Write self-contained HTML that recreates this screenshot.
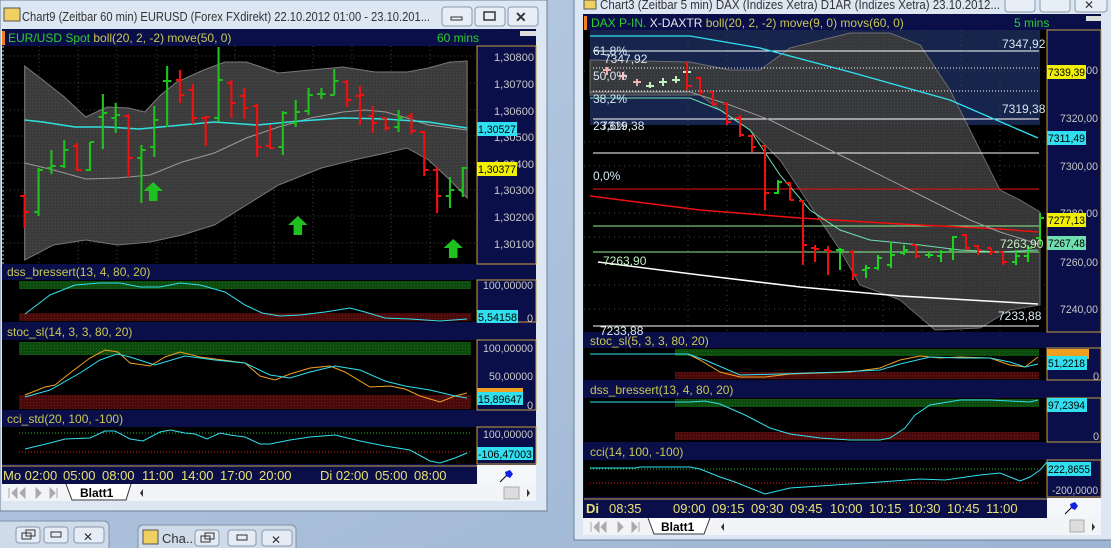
<!DOCTYPE html>
<html><head><meta charset="utf-8"><style>
html,body{margin:0;padding:0;width:1111px;height:548px;overflow:hidden;background:#a9bfd9;}
svg{display:block}
text{font-family:"Liberation Sans",sans-serif;}
</style></head><body>
<svg width="1111" height="548" viewBox="0 0 1111 548" xmlns="http://www.w3.org/2000/svg">
<defs>
<pattern id="dots" width="3" height="3" patternUnits="userSpaceOnUse"><rect width="3" height="3" fill="#3b3b3b"/><rect width="1" height="1" fill="#4a4a4a"/></pattern>
<pattern id="gdots" width="3" height="3" patternUnits="userSpaceOnUse"><rect width="3" height="3" fill="#0d4a0d"/><rect width="1" height="1" fill="#1a6a1a"/></pattern>
<pattern id="rdots" width="3" height="3" patternUnits="userSpaceOnUse"><rect width="3" height="3" fill="#4a0a0a"/><rect width="1" height="1" fill="#6a1a1a"/></pattern>
<linearGradient id="bg" x1="0" y1="0" x2="1" y2="1"><stop offset="0" stop-color="#b8cbe2"/><stop offset="1" stop-color="#9db5d3"/></linearGradient>
</defs>
<rect width="1111" height="548" fill="url(#bg)"/>

<!-- LEFT WINDOW -->
<rect x="0" y="0" width="547" height="511" fill="#dce7f3" stroke="#6d7f96"/>
<rect x="4" y="8" width="16" height="13" fill="#f0d060" stroke="#555"/>
<text x="22" y="21" font-size="13" fill="#333" textLength="408" lengthAdjust="spacingAndGlyphs">Chart9 (Zeitbar 60 min)  EURUSD (Forex FXdirekt) 22.10.2012 01:00 - 23.10.201...</text>
<rect x="442" y="7" width="30" height="19" rx="3" fill="#e8eef6" stroke="#8898ad"/><rect x="451" y="17" width="11" height="3" fill="none" stroke="#333"/>
<rect x="475" y="7" width="30" height="19" rx="3" fill="#e8eef6" stroke="#8898ad"/><rect x="484" y="12" width="11" height="8" fill="none" stroke="#333" stroke-width="1.5"/>
<rect x="508" y="7" width="30" height="19" rx="3" fill="#e8eef6" stroke="#8898ad"/><text x="515" y="22" font-size="14" font-weight="bold" fill="#333">✕</text>

<rect x="2" y="29" width="534" height="455" fill="#0a0f4a"/>
<rect x="2" y="31" width="3" height="14" fill="#f08020"/>
<text x="8" y="42" font-size="12" fill="#2bd02b">EUR/USD Spot <tspan fill="#c8c850">boll(20, 2, -2) move(50, 0)</tspan></text>
<text x="437" y="42" font-size="12" fill="#2bd02b">60 mins</text>
<rect x="520" y="31" width="16" height="5" fill="#ddd"/>
<rect x="2" y="46" width="475" height="218" fill="#000"/>
<rect x="477" y="46" width="59" height="218" fill="#0a0f4a" stroke="#c8a040"/>
<g stroke="#444" stroke-dasharray="1,3">
<line x1="2" y1="56" x2="477" y2="56"/><line x1="2" y1="83" x2="477" y2="83"/><line x1="2" y1="110" x2="477" y2="110"/><line x1="2" y1="136" x2="477" y2="136"/><line x1="2" y1="163" x2="477" y2="163"/><line x1="2" y1="190" x2="477" y2="190"/><line x1="2" y1="216" x2="477" y2="216"/><line x1="2" y1="243" x2="477" y2="243"/>
<line x1="39" y1="46" x2="39" y2="264"/><line x1="78" y1="46" x2="78" y2="264"/><line x1="117" y1="46" x2="117" y2="264"/><line x1="157" y1="46" x2="157" y2="264"/><line x1="196" y1="46" x2="196" y2="264"/><line x1="235" y1="46" x2="235" y2="264"/><line x1="274" y1="46" x2="274" y2="264"/><line x1="313" y1="46" x2="313" y2="264"/><line x1="352" y1="46" x2="352" y2="264"/><line x1="391" y1="46" x2="391" y2="264"/><line x1="430" y1="46" x2="430" y2="264"/>
</g>
<g transform="scale(1.0714,1)">
<polygon fill="url(#dots)" stroke="#777" points="23,66 40,80 60,97 80,117 100,107 120,108 135,112 150,95 165,82 190,70 210,62 230,62 260,73 290,70 320,67 350,72 380,72 400,68 420,62 436,61 436,198 420,180 400,160 380,148 360,153 330,160 300,168 260,185 230,205 200,225 170,235 140,242 110,245 80,240 50,245 23,260"/>
<polyline fill="none" stroke="#999" points="23,163 50,170 80,179 110,178 140,175 170,162 200,153 230,138 260,127 290,118 320,112 340,110 360,112 380,118 400,125 436,130"/>
<polyline fill="none" stroke="#30e0e0" stroke-width="1.5" points="23,120 40,122 70,127 100,127 130,129 160,126 200,122 240,125 280,121 320,118 360,119 400,122 436,128"/>
<g stroke-width="2">
<path stroke="#f01010" d="M23,194V228M19,196H23M23,212H27M72,143V171M68,146H72M72,170H76M120,114V177M116,116H120M120,158H124M168,70V103M164,80H168M168,95H172M180,84V124M176,90H180M180,118H184M192,116V146M188,118H192M192,117H196M216,80V118M212,83H216M216,103H220M228,88V119M224,96H228M228,108H232M240,104V157M236,106H240M240,147H244M252,125V149M248,146H252M252,148H256M324,80V107M320,82H324M324,100H328M336,86V125M332,96H336M336,95H340M348,106V133M344,116H348M348,123H352M360,118V131M356,118H360M360,128H364M384,113V134M380,116H384M384,131H388M396,131V176M392,132H396M396,170H400M408,167V213M404,170H408M408,196H412"/>
<path stroke="#20c020" d="M36,168V216M32,212H36M36,170H40M48,150V174M44,168H48M48,166H52M60,140V168M56,166H60M60,150H64M84,142V171M80,170H84M84,142H88M96,94V149M92,117H96M96,113H100M108,103V133M104,118H108M108,115H112M132,145V203M128,158H132M132,150H136M144,106V157M140,147H144M144,120H148M156,66V127M152,81H156M156,81H160M204,47V122M200,118H204M204,80H208M264,111V155M260,147H264M264,113H268M276,100V127M272,123H276M276,112H280M288,88V115M284,111H288M288,95H292M300,88V99M296,94H300M300,94H304M312,69V95M308,95H312M312,81H316M372,110V132M368,127H372M372,118H376M420,177V208M416,196H420M420,190H424M432,167V197M428,190H432M432,168H436"/>
</g>
<path fill="#20c020" d="M143,182l9,9h-5v10h-8v-10h-5z M278,216l9,9h-5v10h-8v-10h-5z M423,239l9,9h-5v10h-8v-10h-5z"/>
</g>
<g font-size="11" fill="#c8c8c8">
<text x="494" y="61" textLength="40" lengthAdjust="spacingAndGlyphs">1,30800</text><text x="494" y="88" textLength="40" lengthAdjust="spacingAndGlyphs">1,30700</text><text x="494" y="115" textLength="40" lengthAdjust="spacingAndGlyphs">1,30600</text><text x="494" y="141" textLength="40" lengthAdjust="spacingAndGlyphs">1,30500</text><text x="494" y="168" textLength="40" lengthAdjust="spacingAndGlyphs">1,30400</text><text x="494" y="194" textLength="40" lengthAdjust="spacingAndGlyphs">1,30300</text><text x="494" y="221" textLength="40" lengthAdjust="spacingAndGlyphs">1,30200</text><text x="494" y="248" textLength="40" lengthAdjust="spacingAndGlyphs">1,30100</text>
</g>
<rect x="477" y="122" width="40" height="14" fill="#30e0f0"/><text x="478" y="133" font-size="11" fill="#000" textLength="38" lengthAdjust="spacingAndGlyphs">1,30527</text>
<rect x="477" y="162" width="40" height="14" fill="#f0f000"/><text x="478" y="173" font-size="11" fill="#000" textLength="38" lengthAdjust="spacingAndGlyphs">1,30377</text>
<line x1="3" y1="46" x2="3" y2="264" stroke="#ccc" stroke-dasharray="2,2"/>

<!-- dss -->
<text x="7" y="276" font-size="12" fill="#c8c850">dss_bressert(13, 4, 80, 20)</text>
<rect x="2" y="280" width="475" height="42" fill="#000"/>
<rect x="19" y="281" width="452" height="8" fill="url(#gdots)"/>
<rect x="19" y="313" width="452" height="8" fill="url(#rdots)"/>
<rect x="477" y="280" width="59" height="42" fill="#0a0f4a" stroke="#c8a040"/>
<polyline fill="none" stroke="#30e0f0" points="25,314 50,295 75,285 100,283 120,283 140,287 160,287 180,283 200,285 225,292 245,305 262,313 280,316 300,315 325,312 350,308 365,312 385,318 410,319 440,321 467,319"/>
<text x="483" y="289" font-size="11" fill="#c8c8c8" textLength="50" lengthAdjust="spacingAndGlyphs">100,00000</text><text x="527" y="322" font-size="11" fill="#c8c8c8">0</text>
<rect x="477" y="310" width="41" height="13" fill="#30e0f0"/><text x="478" y="321" font-size="11" fill="#000" textLength="39" lengthAdjust="spacingAndGlyphs">5,54158</text>
<!-- stoc -->
<text x="7" y="336" font-size="12" fill="#c8c850">stoc_sl(14, 3, 3, 80, 20)</text>
<rect x="2" y="340" width="475" height="70" fill="#000"/>
<rect x="19" y="342" width="452" height="13" fill="url(#gdots)"/>
<rect x="19" y="395" width="452" height="14" fill="url(#rdots)"/>
<rect x="477" y="340" width="59" height="70" fill="#0a0f4a" stroke="#c8a040"/>
<polyline fill="none" stroke="#f0a020" points="25,395 45,387 55,385 70,373 90,358 105,350 118,352 130,363 150,366 165,357 180,352 200,357 245,363 260,376 275,380 290,374 310,368 330,366 345,372 370,387 390,386 405,389 420,396 440,402 455,396 467,393"/>
<polyline fill="none" stroke="#30e0f0" points="25,397 50,390 80,373 100,360 117,354 130,357 155,365 185,356 215,360 245,363 270,375 290,378 310,372 335,366 360,370 385,381 405,386 430,390 455,396 467,398"/>
<text x="483" y="352" font-size="11" fill="#c8c8c8" textLength="50" lengthAdjust="spacingAndGlyphs">100,00000</text><text x="489" y="380" font-size="11" fill="#c8c8c8" textLength="44" lengthAdjust="spacingAndGlyphs">50,00000</text><text x="527" y="409" font-size="11" fill="#c8c8c8">0</text>
<rect x="477" y="388" width="46" height="9" fill="#f0a020"/>
<rect x="477" y="392" width="46" height="13" fill="#30e0f0"/><text x="478" y="403" font-size="11" fill="#000" textLength="44" lengthAdjust="spacingAndGlyphs">15,89647</text>
<!-- cci -->
<text x="7" y="423" font-size="12" fill="#c8c850">cci_std(20, 100, -100)</text>
<rect x="2" y="427" width="475" height="37" fill="#000"/>
<line x1="19" y1="433" x2="471" y2="433" stroke="#20c020" stroke-dasharray="1,2"/>
<line x1="19" y1="452" x2="471" y2="452" stroke="#e02020" stroke-dasharray="1,2"/>
<rect x="477" y="427" width="59" height="37" fill="#0a0f4a" stroke="#c8a040"/>
<polyline fill="none" stroke="#30e0f0" points="25,449 50,443 65,439 90,438 105,431 115,431 130,439 143,441 160,432 170,430 185,433 195,434 207,439 220,433 230,435 245,437 260,444 270,444 290,440 310,437 335,435 360,441 385,446 410,450 430,461 440,463 455,458 467,453"/>
<text x="483" y="438" font-size="11" fill="#c8c8c8" textLength="50" lengthAdjust="spacingAndGlyphs">100,00000</text>
<rect x="477" y="447" width="56" height="13" fill="#30e0f0"/><text x="478" y="458" font-size="11" fill="#000" textLength="54" lengthAdjust="spacingAndGlyphs">-106,47003</text>
<!-- time axis -->
<rect x="2" y="465" width="475" height="19" fill="#0a0f4a"/>
<line x1="2" y1="466" x2="477" y2="466" stroke="#c8a040"/>
<rect x="477" y="465" width="59" height="19" fill="#f4f6fa"/>
<path d="M500,482 L508,474" stroke="#000"/><path fill="#1020e0" d="M505,472l5,-2l3,4l-3,4l-4,-2z"/>
<g font-size="13" fill="#e8e070"><text x="3" y="480">Mo 02:00</text><text x="63" y="480">05:00</text><text x="102" y="480">08:00</text><text x="142" y="480">11:00</text><text x="181" y="480">14:00</text><text x="220" y="480">17:00</text><text x="259" y="480">20:00</text><text x="320" y="480">Di 02:00</text><text x="375" y="480">05:00</text><text x="414" y="480">08:00</text></g>
<rect x="2" y="484" width="534" height="17" fill="#f2f4f8"/>
<g fill="#aaa" stroke="#aaa"><path d="M9,488v10M17,488l-5,5l5,5zM25,488l-5,5l5,5zM36,488l5,5l-5,5zM50,488l5,5l-5,5zM57,488v10"/></g>
<path d="M66,484 L72,500 H126 L131,484" fill="#fff" stroke="#333"/>
<text x="80" y="497" font-size="12" font-weight="bold" fill="#000">Blatt1</text>
<path d="M143,489l-3,4l3,4z" fill="#333"/>
<rect x="504" y="487" width="15" height="12" fill="#ddd" stroke="#aaa"/><path d="M527,489l3,4l-3,4z" fill="#333"/>

<!-- bottom taskbar bits -->
<rect x="-5" y="521" width="114" height="30" rx="5" fill="#cfdbe9" stroke="#7f90a8"/>
<rect x="16" y="527" width="24" height="16" rx="3" fill="#e5ecf5" stroke="#8898ad"/><rect x="22" y="533" width="9" height="6" fill="none" stroke="#333"/><rect x="26" y="530" width="9" height="6" fill="none" stroke="#333"/>
<rect x="44" y="527" width="24" height="16" rx="3" fill="#e5ecf5" stroke="#8898ad"/><rect x="51" y="532" width="10" height="5" fill="none" stroke="#333"/>
<rect x="74" y="527" width="30" height="16" rx="3" fill="#e5ecf5" stroke="#8898ad"/><text x="83" y="541" font-size="12" fill="#333">✕</text>
<rect x="138" y="525" width="158" height="28" rx="5" fill="#cfdbe9" stroke="#7f90a8"/>
<rect x="143" y="530" width="15" height="14" fill="#f0d060" stroke="#555"/>
<text x="162" y="543" font-size="13" fill="#333">Cha...</text>
<rect x="195" y="530" width="24" height="16" rx="3" fill="#e5ecf5" stroke="#8898ad"/><rect x="201" y="536" width="9" height="6" fill="none" stroke="#333"/><rect x="205" y="533" width="9" height="6" fill="none" stroke="#333"/>
<rect x="228" y="530" width="28" height="16" rx="3" fill="#e5ecf5" stroke="#8898ad"/><rect x="237" y="535" width="10" height="5" fill="none" stroke="#333"/>
<rect x="262" y="530" width="30" height="16" rx="3" fill="#e5ecf5" stroke="#8898ad"/><text x="271" y="544" font-size="12" fill="#333">✕</text>

<!-- RIGHT WINDOW -->
<rect x="574" y="-2" width="540" height="542" fill="#dce7f3" stroke="#6d7f96"/>
<rect x="584" y="0" width="12" height="9" fill="#f0d060" stroke="#555"/>
<text x="600" y="9" font-size="13" fill="#333" textLength="400" lengthAdjust="spacingAndGlyphs">Chart3 (Zeitbar 5 min)  DAX (Indizes Xetra) D1AR (Indizes Xetra) 23.10.2012...</text>
<rect x="1005" y="-5" width="30" height="17" rx="3" fill="#e8eef6" stroke="#8898ad"/>
<rect x="1040" y="-5" width="30" height="17" rx="3" fill="#e8eef6" stroke="#8898ad"/>
<rect x="1075" y="-5" width="32" height="17" rx="3" fill="#e8eef6" stroke="#8898ad"/><text x="1084" y="9" font-size="12" fill="#333">✕</text>

<rect x="583" y="14" width="518" height="504" fill="#0a0f4a"/>
<rect x="584" y="16" width="3" height="14" fill="#f08020"/>
<text x="591" y="27" font-size="12" fill="#2bd02b">DAX P-IN. <tspan fill="#e8e8e8">X-DAXTR</tspan> <tspan fill="#c8c850">boll(20, 2, -2) move(9, 0) movs(60, 0)</tspan></text>
<text x="1014" y="27" font-size="12" fill="#2bd02b">5 mins</text>
<rect x="1086" y="16" width="15" height="5" fill="#ddd"/>
<rect x="584" y="30" width="463" height="302" fill="#000"/>
<rect x="590" y="30" width="450" height="95" fill="#1b2a58" opacity="0.85"/>
<polygon fill="url(#dots)" opacity="0.9" stroke="#777" points="590,60 690,62 730,70 760,70 790,48 850,33 890,33 920,45 950,90 975,140 1000,190 1020,200 1040,212 1040,305 1010,310 980,328 935,330 900,300 860,285 840,250 820,220 800,190 780,160 750,130 720,110 700,95 590,95"/>
<g stroke="#444" stroke-dasharray="1,4">
<line x1="584" y1="71" x2="1047" y2="71"/><line x1="584" y1="142" x2="1047" y2="142"/><line x1="584" y1="166" x2="1047" y2="166"/><line x1="584" y1="213" x2="1047" y2="213"/><line x1="584" y1="237" x2="1047" y2="237"/><line x1="584" y1="285" x2="1047" y2="285"/><line x1="584" y1="309" x2="1047" y2="309"/>
<line x1="688" y1="30" x2="688" y2="332"/><line x1="727" y1="30" x2="727" y2="332"/><line x1="766" y1="30" x2="766" y2="332"/><line x1="805" y1="30" x2="805" y2="332"/><line x1="844" y1="30" x2="844" y2="332"/><line x1="883" y1="30" x2="883" y2="332"/><line x1="922" y1="30" x2="922" y2="332"/><line x1="961" y1="30" x2="961" y2="332"/><line x1="1000" y1="30" x2="1000" y2="332"/>
</g>
<g stroke="#fff">
<line x1="593" y1="51" x2="1039" y2="51"/><line x1="593" y1="68" x2="1039" y2="68" stroke-dasharray="1,2"/><line x1="593" y1="91" x2="1039" y2="91" stroke-dasharray="1,2"/><line x1="593" y1="119" x2="1039" y2="119"/><line x1="593" y1="153" x2="1039" y2="153"/><line x1="593" y1="326" x2="1039" y2="326"/>
</g>
<line x1="593" y1="189" x2="1039" y2="189" stroke="#f01010"/>
<line x1="593" y1="226" x2="1039" y2="226" stroke="#90f090"/>
<line x1="593" y1="252" x2="1039" y2="252" stroke="#90f090"/>
<polyline fill="none" stroke="#f01010" stroke-width="1.5" points="590,196 700,210 800,218 900,224 1000,229 1038,232"/>
<polyline fill="none" stroke="#fff" stroke-width="1.5" points="598,262 700,275 800,287 900,296 1038,304"/>
<polyline fill="none" stroke="#30e0f0" stroke-width="1.3" points="590,36 690,36 760,48 850,72 950,100 1038,138"/>
<polyline fill="none" stroke="#999" points="590,92 690,92 730,105 770,120 820,145 870,170 920,195 970,220 1000,232 1038,244"/>
<polyline fill="none" stroke="#70e0b0" points="590,98 690,98 720,110 750,130 780,175 810,210 840,230 870,240 920,245 960,250 1000,252 1038,250"/>
<g stroke-width="2">
<path stroke="#f0b0b0" d="M607,67V75M603,70H611M623,72V80M619,76H627M637,79V86M633,82H641"/>
<path stroke="#c0f0c0" d="M650,82V88M646,86H654M663,78V86M659,82H667M676,76V83M672,80H680M687,66V77M683,72H691"/>
<path stroke="#f01010" d="M687,62V90M687,86H692M700,77V95M696,78H700M700,92H704M713,92V106M709,92H713M713,104H717M727,102V125M723,104H727M727,122H731M740,115V137M736,118H740M740,135H744M752,135V152M748,136H752M752,147H756M765,146V210M761,146H765M765,193H769M790,182V200M786,183H790M790,200H794M803,200V265M799,201H803M803,245H807M815,245V262M811,248H815M815,249H819M828,246V275M824,250H828M828,251H832M853,250V280M849,252H853M853,275H857M916,245V258M912,245H916M916,256H920M966,234V250M962,235H966M966,248H970M978,245V255M974,246H978M978,250H982M991,248V255M987,248H991M991,252H995M1003,252V265M999,252H1003M1003,262H1007"/>
<path stroke="#20d020" d="M778,180V194M774,193H778M778,182H782M840,248V270M836,250H840M840,250H844M866,265V278M862,270H866M866,268H870M878,255V270M874,268H878M878,258H882M891,242V268M887,265H891M891,255H895M904,245V255M900,253H904M904,250H908M929,252V258M925,255H929M929,255H933M941,250V262M937,256H941M941,252H945M953,236V260M949,250H953M953,237H957M1016,250V265M1012,262H1016M1016,256H1020M1028,245V262M1024,256H1028M1028,248H1032M1040,213V245M1036,238H1040M1040,218H1044"/>
</g>
<g font-size="12" fill="#d8e8f0">
<text x="1002" y="48">7347,92</text><text x="593" y="55">61,8%</text><text x="604" y="63">7347,92</text><text x="593" y="80">50,0%</text><text x="593" y="103">38,2%</text><text x="1002" y="113">7319,38</text><text x="593" y="130">23,6%</text><text x="601" y="130">7319,38</text><text x="593" y="180">0,0%</text><text x="603" y="265" fill="#c0f0c0">7263,90</text><text x="1000" y="248" fill="#c0f0c0">7263,90</text><text x="998" y="320">7233,88</text><text x="600" y="335">7233,88</text>
</g>
<rect x="1047" y="30" width="54" height="302" fill="#0a0f4a" stroke="#c8a040"/>
<g font-size="11" fill="#c8c8c8"><text x="1060" y="74" textLength="38" lengthAdjust="spacingAndGlyphs">7340,00</text><text x="1060" y="122" textLength="38" lengthAdjust="spacingAndGlyphs">7320,00</text><text x="1060" y="170" textLength="38" lengthAdjust="spacingAndGlyphs">7300,00</text><text x="1060" y="217" textLength="38" lengthAdjust="spacingAndGlyphs">7280,00</text><text x="1060" y="266" textLength="38" lengthAdjust="spacingAndGlyphs">7260,00</text><text x="1060" y="313" textLength="38" lengthAdjust="spacingAndGlyphs">7240,00</text></g>
<rect x="1047" y="65" width="39" height="14" fill="#f0f000"/><text x="1048" y="76" font-size="11" fill="#000" textLength="37" lengthAdjust="spacingAndGlyphs">7339,39</text>
<rect x="1047" y="131" width="39" height="14" fill="#30e0f0"/><text x="1048" y="142" font-size="11" fill="#000" textLength="37" lengthAdjust="spacingAndGlyphs">7311,49</text>
<rect x="1047" y="213" width="39" height="14" fill="#f0f000"/><text x="1048" y="224" font-size="11" fill="#000" textLength="37" lengthAdjust="spacingAndGlyphs">7277,13</text>
<rect x="1047" y="236" width="39" height="14" fill="#70e0b0"/><text x="1048" y="247" font-size="11" fill="#000" textLength="37" lengthAdjust="spacingAndGlyphs">7267,48</text>
<!-- stoc right -->
<text x="590" y="345" font-size="12" fill="#c8c850">stoc_sl(5, 3, 3, 80, 20)</text>
<rect x="584" y="348" width="463" height="32" fill="#000"/>
<rect x="675" y="349" width="364" height="7" fill="url(#gdots)"/>
<rect x="675" y="372" width="364" height="7" fill="url(#rdots)"/>
<rect x="1047" y="348" width="54" height="32" fill="#0a0f4a" stroke="#c8a040"/>
<polyline fill="none" stroke="#f0a020" points="590,354 688,354 700,360 720,372 740,377 765,377 790,374 850,372 880,368 900,360 920,356 940,358 960,357 990,358 1010,365 1025,367 1038,357"/>
<polyline fill="none" stroke="#30e0f0" points="590,354 688,354 705,360 740,375 780,374 840,372 880,370 900,364 930,357 960,358 990,358 1010,362 1025,367 1038,364"/>
<rect x="1047" y="349" width="42" height="10" fill="#f0a020"/>
<rect x="1047" y="356" width="40" height="14" fill="#30e0f0"/><text x="1048" y="367" font-size="11" fill="#000" textLength="37" lengthAdjust="spacingAndGlyphs">51,2218</text>
<text x="1093" y="380" font-size="11" fill="#c8c8c8">0</text>
<!-- dss right -->
<text x="590" y="394" font-size="12" fill="#c8c850">dss_bressert(13, 4, 80, 20)</text>
<rect x="584" y="398" width="463" height="44" fill="#000"/>
<rect x="675" y="399" width="364" height="8" fill="url(#gdots)"/>
<rect x="675" y="432" width="364" height="8" fill="url(#rdots)"/>
<rect x="1047" y="398" width="54" height="44" fill="#0a0f4a" stroke="#c8a040"/>
<polyline fill="none" stroke="#30e0f0" points="590,402 690,402 705,401 720,404 745,415 770,428 790,434 820,438 850,440 880,440 890,438 905,428 915,415 930,405 960,400 990,400 1010,401 1030,402 1038,400"/>
<rect x="1047" y="398" width="40" height="14" fill="#30e0f0"/><text x="1048" y="409" font-size="11" fill="#000" textLength="37" lengthAdjust="spacingAndGlyphs">97,2394</text>
<text x="1093" y="440" font-size="11" fill="#c8c8c8">0</text>
<!-- cci right -->
<text x="590" y="456" font-size="12" fill="#c8c850">cci(14, 100, -100)</text>
<rect x="584" y="460" width="463" height="37" fill="#000"/>
<line x1="590" y1="469" x2="1039" y2="469" stroke="#20c020" stroke-dasharray="1,2"/>
<line x1="590" y1="483" x2="1039" y2="483" stroke="#e02020" stroke-dasharray="1,2"/>
<rect x="1047" y="460" width="54" height="37" fill="#0a0f4a" stroke="#c8a040"/>
<polyline fill="none" stroke="#30e0f0" points="590,468 635,468 640,467 690,467 700,469 720,477 735,482 765,494 790,488 820,486 850,484 880,482 920,479 945,480 980,475 1000,473 1020,481 1030,477 1040,470 1047,462"/>
<rect x="1047" y="462" width="44" height="14" fill="#30e0f0"/><text x="1048" y="473" font-size="11" fill="#000" textLength="42" lengthAdjust="spacingAndGlyphs">222,8655</text>
<text x="1052" y="494" font-size="11" fill="#c8c8c8" textLength="46" lengthAdjust="spacingAndGlyphs">-200,0000</text>
<!-- time right -->
<rect x="584" y="498" width="463" height="20" fill="#0a0f4a"/>
<line x1="584" y1="499" x2="1047" y2="499" stroke="#c8a040"/>
<rect x="1047" y="498" width="54" height="20" fill="#f4f6fa"/>
<path d="M1065,514 L1073,506" stroke="#000"/><path fill="#1020e0" d="M1070,504l5,-2l3,4l-3,4l-4,-2z"/>
<g font-size="13" fill="#e8e070"><text x="586" y="513" font-weight="bold">Di</text><text x="609" y="513">08:35</text><text x="673" y="513">09:00</text><text x="712" y="513">09:15</text><text x="751" y="513">09:30</text><text x="790" y="513">09:45</text><text x="830" y="513">10:00</text><text x="869" y="513">10:15</text><text x="908" y="513">10:30</text><text x="947" y="513">10:45</text><text x="986" y="513">11:00</text></g>
<rect x="583" y="518" width="518" height="17" fill="#f2f4f8"/>
<g stroke="#aaa" fill="#aaa"><path d="M591,522v10M599,522l-5,5l5,5zM606,522l-5,5l5,5zM618,522l5,5l-5,5zM632,522l5,5l-5,5zM639,522v10"/></g>
<path d="M648,518 L654,534 H704 L710,518" fill="#fff" stroke="#333"/>
<text x="661" y="531" font-size="12" font-weight="bold" fill="#000">Blatt1</text>
<path d="M724,523l-3,4l3,4z" fill="#333"/>
<rect x="1070" y="520" width="14" height="12" fill="#ddd" stroke="#aaa"/><path d="M1092,523l3,4l-3,4z" fill="#333"/>
</svg>
</body></html>
